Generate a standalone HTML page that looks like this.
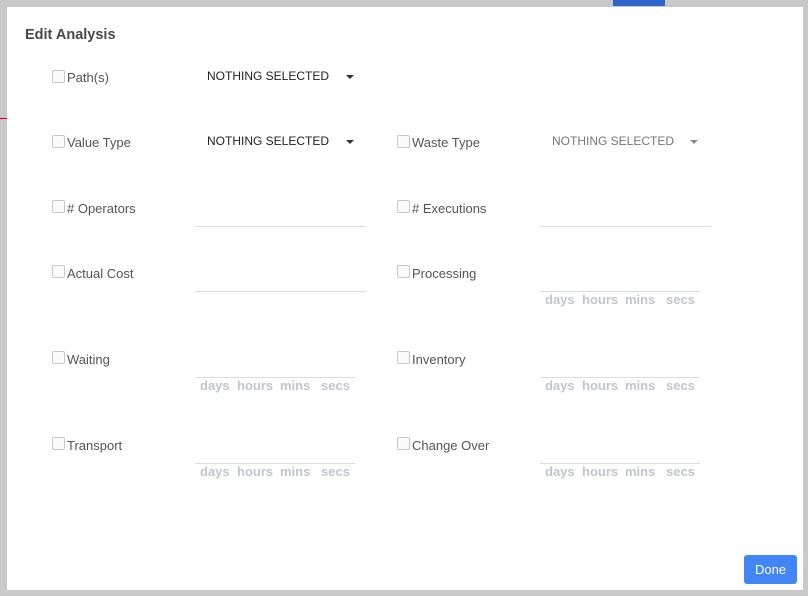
<!DOCTYPE html>
<html><head><style>
*{margin:0;padding:0;box-sizing:border-box}
body{width:808px;height:596px;background:#c9c9c9;position:relative;overflow:hidden;font-family:"Liberation Sans",Arial,sans-serif}
.modal{position:absolute;left:7px;top:7px;width:796px;height:583px;background:#fff}
.a{position:absolute}
h1{position:absolute;left:18px;top:20px;font-size:14.5px;font-weight:bold;color:#4a4a4a}
.cb{position:absolute;width:13px;height:13px;border:1px solid #c8c8c8;border-radius:2px;background:#fafafa}
.lb{position:absolute;font-size:13px;color:#555}
.dd{position:absolute;font-size:12px;color:#222}
.arr{position:absolute;width:0;height:0;border-left:4px solid transparent;border-right:4px solid transparent;border-top:4px solid #333}
.ln{position:absolute;height:1px;background:#ddd}
.u{position:absolute;font-size:13px;font-weight:bold;color:#c2c6cc}
.btn{position:absolute;left:737px;top:548px;width:53px;height:29px;background:#4285f4;border-radius:3px;color:#fff;font-size:13px;text-align:center;line-height:29px}
</style></head><body>
<div class="a" style="left:613px;top:0;width:52px;height:6px;background:#2d64c8"></div>
<div class="a" style="left:0;top:118px;width:7px;height:1px;background:#d00"></div>
<div class="modal">
<h1>Edit Analysis</h1>
<div class="cb" style="left:45px;top:63px"></div><div class="lb" style="left:60px;top:63px">Path(s)</div>
<div class="dd" style="left:200px;top:62px">NOTHING SELECTED</div><div class="arr" style="left:339px;top:68px"></div>

<div class="cb" style="left:45px;top:128px"></div><div class="lb" style="left:60px;top:128px">Value Type</div>
<div class="dd" style="left:200px;top:127px">NOTHING SELECTED</div><div class="arr" style="left:339px;top:133px"></div>
<div class="cb" style="left:390px;top:128px"></div><div class="lb" style="left:405px;top:128px">Waste Type</div>
<div class="dd" style="left:545px;top:127px;color:#777">NOTHING SELECTED</div><div class="arr" style="left:683px;top:133px;border-top-color:#888"></div>

<div class="cb" style="left:45px;top:193px"></div><div class="lb" style="left:60px;top:194px"># Operators</div>
<div class="ln" style="left:188px;top:219px;width:171px"></div>
<div class="cb" style="left:390px;top:193px"></div><div class="lb" style="left:405px;top:194px"># Executions</div>
<div class="ln" style="left:533px;top:219px;width:171px"></div>

<div class="cb" style="left:45px;top:258px"></div><div class="lb" style="left:60px;top:259px">Actual Cost</div>
<div class="ln" style="left:188px;top:284px;width:171px"></div>
<div class="cb" style="left:390px;top:258px"></div><div class="lb" style="left:405px;top:259px">Processing</div>
<div class="ln" style="left:533px;top:284px;width:160px"></div>
<div class="u" style="left:538px;top:285px">days</div><div class="u" style="left:575px;top:285px">hours</div><div class="u" style="left:618px;top:285px">mins</div><div class="u" style="left:659px;top:285px">secs</div>

<div class="cb" style="left:45px;top:344px"></div><div class="lb" style="left:60px;top:345px">Waiting</div>
<div class="ln" style="left:188px;top:370px;width:160px"></div>
<div class="u" style="left:193px;top:371px">days</div><div class="u" style="left:230px;top:371px">hours</div><div class="u" style="left:273px;top:371px">mins</div><div class="u" style="left:314px;top:371px">secs</div>
<div class="cb" style="left:390px;top:344px"></div><div class="lb" style="left:405px;top:345px">Inventory</div>
<div class="ln" style="left:533px;top:370px;width:160px"></div>
<div class="u" style="left:538px;top:371px">days</div><div class="u" style="left:575px;top:371px">hours</div><div class="u" style="left:618px;top:371px">mins</div><div class="u" style="left:659px;top:371px">secs</div>

<div class="cb" style="left:45px;top:430px"></div><div class="lb" style="left:60px;top:431px">Transport</div>
<div class="ln" style="left:188px;top:456px;width:160px"></div>
<div class="u" style="left:193px;top:457px">days</div><div class="u" style="left:230px;top:457px">hours</div><div class="u" style="left:273px;top:457px">mins</div><div class="u" style="left:314px;top:457px">secs</div>
<div class="cb" style="left:390px;top:430px"></div><div class="lb" style="left:405px;top:431px">Change Over</div>
<div class="ln" style="left:533px;top:456px;width:160px"></div>
<div class="u" style="left:538px;top:457px">days</div><div class="u" style="left:575px;top:457px">hours</div><div class="u" style="left:618px;top:457px">mins</div><div class="u" style="left:659px;top:457px">secs</div>

<div class="btn">Done</div>
</div>
</body></html>
